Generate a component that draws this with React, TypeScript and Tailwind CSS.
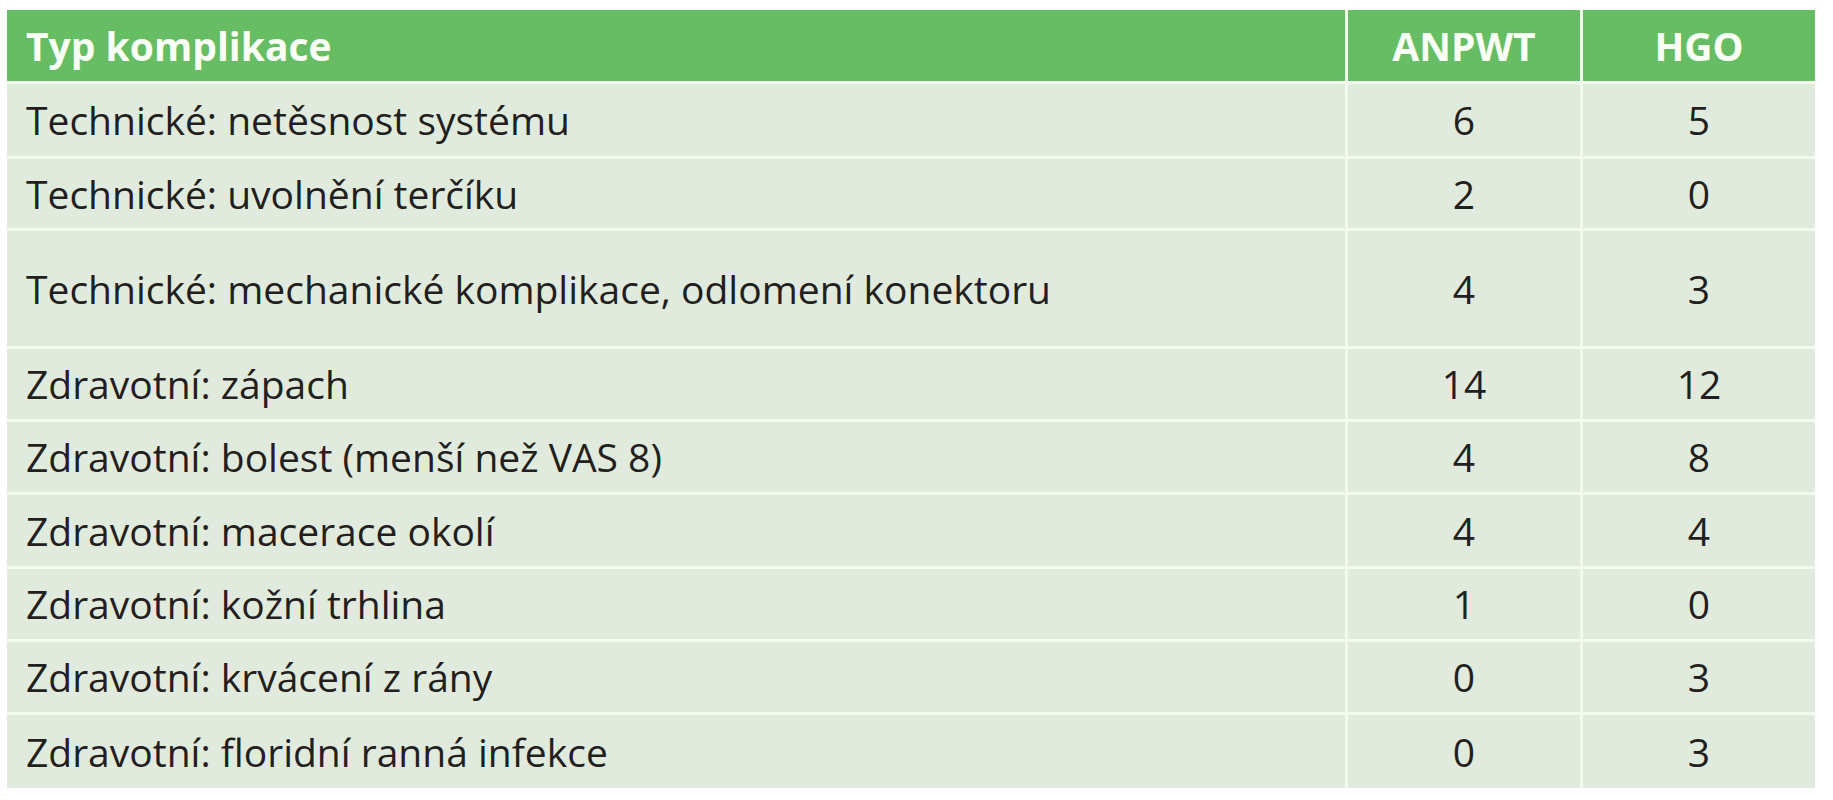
import { Fragment } from "react";

const ROWS: [string, string, string][] = [
  ["Technické: netěsnost systému", "6", "5"],
  ["Technické: uvolnění terčíku", "2", "0"],
  ["Technické: mechanické komplikace, odlomení konektoru", "4", "3"],
  ["Zdravotní: zápach", "14", "12"],
  ["Zdravotní: bolest (menší než VAS 8)", "4", "8"],
  ["Zdravotní: macerace okolí", "4", "4"],
  ["Zdravotní: kožní trhlina", "1", "0"],
  ["Zdravotní: krvácení z rány", "0", "3"],
  ["Zdravotní: floridní ranná infekce", "0", "3"],
];

export default function App() {
  return (
    <div className="min-h-[800px] w-[1833px] bg-white pl-[7px] pt-[10px] font-['Open_Sans',sans-serif]">
      <div className="grid w-[1808px] grid-cols-[1338px_232px_232px] grid-rows-[71px_72px_69px_115px_70px_70px_71px_70px_70px_73px] gap-[3px] bg-[#f3fbee] text-[39px] leading-[52px]">
        {/* Header */}
        <div className="flex items-center bg-[#67bd63] pl-[19px] font-bold text-[#f8fff4]">Typ komplikace</div>
        <div className="flex items-center justify-center bg-[#67bd63] font-bold text-[#f8fff4]">ANPWT</div>
        <div className="flex items-center justify-center bg-[#67bd63] font-bold text-[#f8fff4]">HGO</div>

        {ROWS.map(([label, a, b]) => (
          <Fragment key={label}>
            <div className="flex items-center bg-[#e1ebdd] pl-[19px] text-[#231f20]">{label}</div>
            <div className="flex items-center justify-center bg-[#e1ebdd] text-[#231f20]">{a}</div>
            <div className="flex items-center justify-center bg-[#e1ebdd] text-[#231f20]">{b}</div>
          </Fragment>
        ))}
      </div>
    </div>
  );
}
